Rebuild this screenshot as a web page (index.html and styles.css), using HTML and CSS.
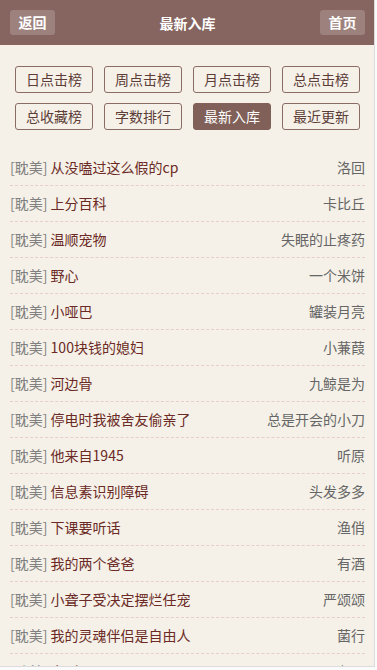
FILE: index.html
```html
<!DOCTYPE html>
<html lang="zh-CN">
<head>
    <meta charset="UTF-8">
    <title>最新入库</title>
    <link rel="stylesheet" href="styles.css">
</head>
<body>
<div class="page">
    <div class="header">
        <a class="hbtn" href="#">返回</a>
        <span class="htitle">最新入库</span>
        <a class="hbtn" href="#">首页</a>
    </div>
    <ul class="tabs">
        <li>日点击榜</li>
        <li>周点击榜</li>
        <li>月点击榜</li>
        <li>总点击榜</li>
        <li>总收藏榜</li>
        <li>字数排行</li>
        <li class="active">最新入库</li>
        <li>最近更新</li>
    </ul>
    <ul class="list">
        <li><span class="name"><em>[耽美]</em> 从没嗑过这么假的cp</span><span class="author">洛回</span></li>
        <li><span class="name"><em>[耽美]</em> 上分百科</span><span class="author">卡比丘</span></li>
        <li><span class="name"><em>[耽美]</em> 温顺宠物</span><span class="author">失眠的止疼药</span></li>
        <li><span class="name"><em>[耽美]</em> 野心</span><span class="author">一个米饼</span></li>
        <li><span class="name"><em>[耽美]</em> 小哑巴</span><span class="author">罐装月亮</span></li>
        <li><span class="name"><em>[耽美]</em> 100块钱的媳妇</span><span class="author">小蒹葭</span></li>
        <li><span class="name"><em>[耽美]</em> 河边骨</span><span class="author">九鲸是为</span></li>
        <li><span class="name"><em>[耽美]</em> 停电时我被舍友偷亲了</span><span class="author">总是开会的小刀</span></li>
        <li><span class="name"><em>[耽美]</em> 他来自1945</span><span class="author">听原</span></li>
        <li><span class="name"><em>[耽美]</em> 信息素识别障碍</span><span class="author">头发多多</span></li>
        <li><span class="name"><em>[耽美]</em> 下课要听话</span><span class="author">渔俏</span></li>
        <li><span class="name"><em>[耽美]</em> 我的两个爸爸</span><span class="author">有酒</span></li>
        <li><span class="name"><em>[耽美]</em> 小聋子受决定摆烂任宠</span><span class="author">严颂颂</span></li>
        <li><span class="name"><em>[耽美]</em> 我的灵魂伴侣是自由人</span><span class="author">菌行</span></li>
        <li><span class="name"><em>[耽美]</em> 穿到1983</span><span class="author">七子</span></li>
    </ul>
</div>
</body>
</html>
```
FILE: styles.css
```css
*{
    padding: 0;
    margin: 0;
    box-sizing: border-box;
}
body{
    background: #fbfbfb;
    font-family: "Noto Sans CJK SC", "Liberation Sans", sans-serif;
    font-size: 14px;
}
ul,li{
    list-style: none;
}
.page{
    width: 375px;
    height: 667px;
    overflow: hidden;
    background: #f5f1e8;
    border-right: 1px solid #dcdcdc;
    border-bottom: 1px solid #dcdcdc;
}
.header{
    height: 45px;
    background: #866460;
    display: flex;
    align-items: center;
    justify-content: space-between;
    padding: 0 9px 0 10px;
}
.hbtn{
    display: block;
    width: 45px;
    height: 25px;
    line-height: 25px;
    text-align: center;
    border-radius: 3px;
    background: #9d817d;
    color: #fff;
    font-weight: bold;
    font-size: 14px;
    text-decoration: none;
}
.htitle{
    color: #fff;
    font-weight: bold;
    font-size: 14px;
}
.tabs{
    display: grid;
    grid-template-columns: repeat(4, 78px);
    column-gap: 11px;
    row-gap: 10px;
    padding: 21px 0 0 15px;
}
.tabs li{
    height: 27px;
    line-height: 25px;
    border: 1px solid #8b6b66;
    border-radius: 3px;
    text-align: center;
    color: #5c3d38;
    font-size: 14px;
}
.tabs .active{
    background: #806058;
    border-color: #806058;
    color: #fff;
}
.list{
    margin-top: 20px;
    padding: 0 9px 0 10px;
}
.list li{
    display: flex;
    justify-content: space-between;
    height: 36px;
    line-height: 35px;
    border-bottom: 1px dashed #e6cfca;
    white-space: nowrap;
}
.name{
    color: #6b2a25;
}
.name em{
    font-style: normal;
    color: #808080;
}
.author{
    color: #666;
}
```
